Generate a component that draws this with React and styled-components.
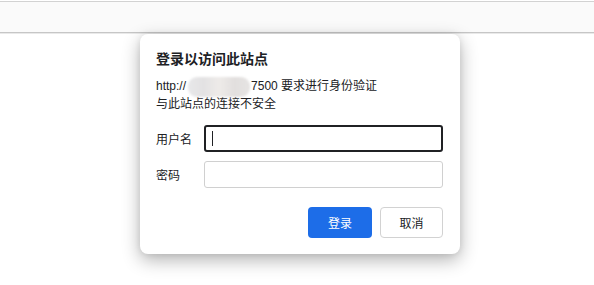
import React from "react";
import styled, { createGlobalStyle } from "styled-components";

const Global = createGlobalStyle`
  html, body { margin: 0; padding: 0; background: #ffffff; }
  body { font-family: "Liberation Sans", "Noto Sans CJK SC", sans-serif; color: #202124; }
`;

const Page = styled.div`
  width: 594px;
  height: 285px;
  overflow: hidden;
  display: flex;
  flex-direction: column;
  background: #ffffff;
`;

const Header = styled.div`
  padding-top: 1px;
  background: #ffffff;
`;

const Toolbar = styled.div`
  height: 30px;
  background: #fafafa;
  border-top: 1px solid #d2d2d2;
  border-bottom: 1px solid #c6c6c6;
  box-shadow: 0 1px 0 #e9e9e9;
`;

const Dialog = styled.div`
  margin: 1px 0 0 140px;
  width: 320px;
  box-sizing: border-box;
  padding: 13px 17px 16px 16px;
  background: #ffffff;
  border-radius: 8px;
  box-shadow: 0 6px 18px rgba(0, 0, 0, 0.3), 0 0 6px rgba(0, 0, 0, 0.08);
  display: flex;
  flex-direction: column;
`;

const Title = styled.h1`
  margin: 0;
  font-family: "Noto Sans CJK SC", sans-serif;
  font-size: 14px;
  line-height: 22px;
  font-weight: 700;
  color: #202124;
`;

const Message = styled.div`
  margin-top: 7px;
  font-size: 12px;
  line-height: 16px;
  color: #202124;
`;

const Line = styled.div`
  display: flex;
  align-items: center;
  white-space: nowrap;
`;

const Redacted = styled.span`
  display: inline-block;
  width: 62px;
  height: 20px;
  margin: 0 1px 0 2px;
  border-radius: 9px;
  background: linear-gradient(
    90deg,
    #e8e8ea 0%,
    #e3e2e3 25%,
    #eeebe9 50%,
    #e2dfde 75%,
    #e6e4e3 100%
  );
  filter: blur(1.2px);
  position: relative;
  top: 1px;
`;

const Form = styled.div`
  margin-top: 13px;
  display: grid;
  grid-template-columns: 48px 1fr;
  row-gap: 9px;
  align-items: center;
`;

const Label = styled.label`
  font-size: 12px;
  color: #202124;
  font-family: "Noto Sans CJK SC", sans-serif;
`;

const Input = styled.div`
  height: 27px;
  box-sizing: border-box;
  border-radius: 3px;
  border: ${(p) => (p.$focused ? "2px solid #202124" : "1px solid #d0d0d0")};
  display: flex;
  align-items: center;
  padding-left: ${(p) => (p.$focused ? "6px" : "7px")};
`;

const Caret = styled.span`
  width: 1px;
  height: 15px;
  background: #202124;
`;

const Actions = styled.div`
  margin-top: 19px;
  display: flex;
  justify-content: flex-end;
  gap: 8px;
`;

const Button = styled.button`
  width: ${(p) => (p.$primary ? "64px" : "63px")};
  height: 31px;
  box-sizing: border-box;
  border-radius: 4px;
  font-family: "Noto Sans CJK SC", sans-serif;
  font-size: 12px;
  cursor: pointer;
  border: ${(p) => (p.$primary ? "none" : "1px solid #d2d2d2")};
  background: ${(p) => (p.$primary ? "#1d6de8" : "#ffffff")};
  color: ${(p) => (p.$primary ? "#ffffff" : "#202124")};
  padding: 0;
`;

export default function App() {
  return (
    <>
      <Global />
      <Page>
        <Header>
          <Toolbar />
        </Header>
        <Dialog>
          <Title>登录以访问此站点</Title>
          <Message>
            <Line>
              http://<Redacted />7500 要求进行身份验证
            </Line>
            <Line>与此站点的连接不安全</Line>
          </Message>
          <Form>
            <Label>用户名</Label>
            <Input $focused>
              <Caret />
            </Input>
            <Label>密码</Label>
            <Input />
          </Form>
          <Actions>
            <Button $primary>登录</Button>
            <Button>取消</Button>
          </Actions>
        </Dialog>
      </Page>
    </>
  );
}
